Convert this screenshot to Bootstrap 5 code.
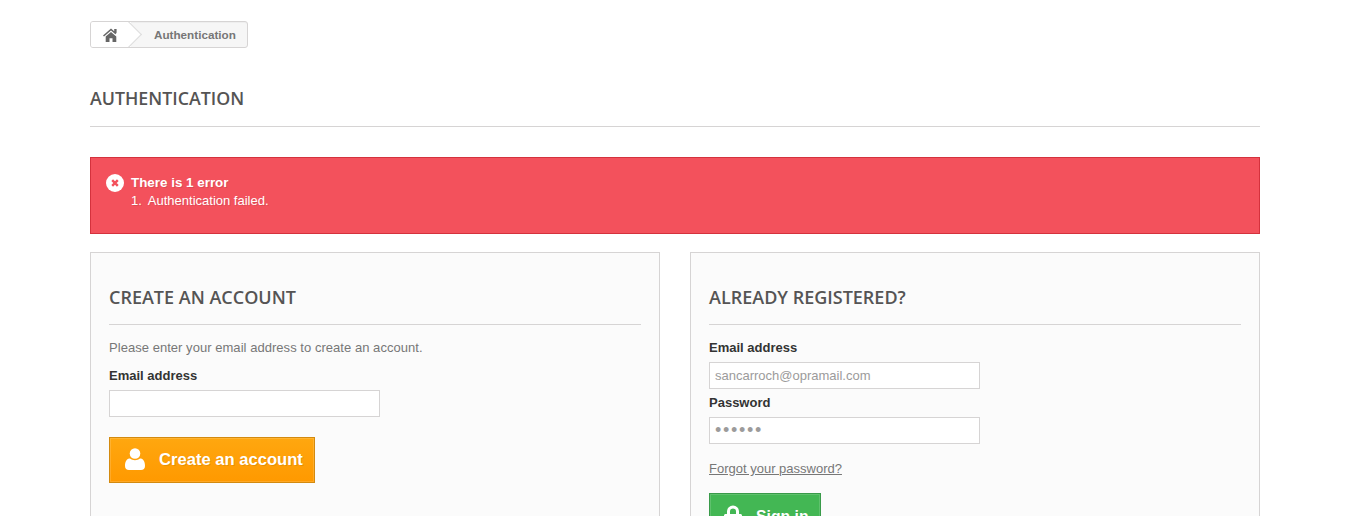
<!DOCTYPE html>
<html lang="en">
<head>
<meta charset="utf-8">
<title>Authentication</title>
<link href="https://cdn.jsdelivr.net/npm/bootstrap@5.3.0/dist/css/bootstrap.min.css" rel="stylesheet">
<style>
html,body{overflow:hidden;height:516px}
body{font-family:Arial,"Liberation Sans",sans-serif;font-size:13px;line-height:18px;color:#777;background:#fff}
.shell{width:1170px;margin:0 0 0 90px;padding-top:21px}
.crumbs{width:158px;height:27px;border:1px solid #d6d4d4;border-radius:3px;background:#f6f6f6;overflow:hidden;font-size:11.7px;font-weight:700;color:#777;box-shadow:0 1px 0 #eee inset}
.crumb-home{width:40px;height:100%;background:#fff;position:relative;padding-left:12px}
.crumb-tip{position:absolute;right:-7px;top:3px;width:19px;height:19px;background:#fff;border-top:1px solid #dcdcdc;border-right:1px solid #dcdcdc;transform:rotate(45deg)}
.crumb-text{padding-left:23px;position:relative}
.page-title{font-family:"Open Sans",sans-serif;font-weight:600;font-size:17.8px;line-height:22px;color:#555454;text-transform:uppercase;margin:39px 0 0;padding-bottom:17px;border-bottom:1px solid #d6d4d4}
.err{background:#f3515c;border:1px solid #d4323d;color:#fff;height:77px;margin-top:30px;padding:15px;text-shadow:1px 1px rgba(0,0,0,.1);font-size:13px}
.err-head{height:19px;margin-bottom:1px}
.err-icon{margin-right:7px}
.err-title{font-weight:700;font-size:13.4px}
.err-line{padding-left:25px;margin-top:-1px}
.err-gap{margin-left:6px}
.cols{--bs-gutter-x:30px;margin-top:18px}
.panel-box{background:#fbfbfb;border:1px solid #d6d4d4;padding:30px 18px 0;height:300px}
.panel-title{font-family:"Open Sans",sans-serif;font-weight:600;font-size:18px;line-height:29px;color:#555454;text-transform:uppercase;margin:0 0 14px;padding-bottom:12px;border-bottom:1px solid #d6d4d4}
.intro{margin:0 0 10px;height:18px;letter-spacing:.04px}
.lbl{display:block;font-weight:700;color:#333;margin:0 0 5px;line-height:18px}
.fld{display:block;width:271px;height:27px;border:1px solid #d6d4d4;background:#fff;padding:3px 5px;color:#9c9b9b;font-family:inherit;font-size:13px;line-height:19px;outline:0;border-radius:0}
.fld-stack{margin-bottom:5px}
.dots{font-size:18px;letter-spacing:1.700px;color:#9c9b9b}
.act{display:inline-flex;align-items:center;border:1px solid;color:#fff;font-weight:700;font-size:16.6px;line-height:21px;text-shadow:1px 1px rgba(0,0,0,.1);padding:0;border-radius:0}
.act-orange{width:206px;height:46px;margin-top:20px;background:linear-gradient(#ffa70f,#ff9900);border-color:#d38a0f;padding:0 0 2px 15px;box-shadow:inset 0 0 0 1px rgba(255,255,255,.15)}
.act-green{width:112px;height:46px;margin-top:15px;background:#43b754;border-color:#399a49;padding-left:14px;font-size:15.8px;box-shadow:inset 0 0 0 1px rgba(255,255,255,.15)}
.act svg{flex:none}
.act-orange svg{margin-right:14px}
.act-green svg{margin-right:14px}
.forgot{display:inline-block;color:#777;text-decoration:underline;margin-top:16px;font-size:13px}
</style>
</head>
<body>
<div class="shell">
  <nav class="crumbs d-flex align-items-center">
    <div class="crumb-home d-flex align-items-center">
      <span class="crumb-tip"></span>
      <svg width="16" height="14" viewBox="0 0 16 14" aria-label="Home"><path fill="#666" d="M8 .4 0 7.400l1 1.100L8 2.600l7 5.900 1-1.100-2.400-2.100V1h-2.400v2.300zM2.700 8.600V14h3.800v-3.800h3V14h3.800V8.600L8 4.100z"/></svg>
    </div>
    <span class="crumb-text">Authentication</span>
  </nav>
  <h1 class="page-title">Authentication</h1>
  <div class="err">
    <div class="d-flex align-items-center err-head">
      <svg class="err-icon" width="18" height="18" viewBox="0 0 18 18" aria-hidden="true"><circle cx="9" cy="9" r="9" fill="#fff"/><path d="M6.200 6.200l5.600 5.600M11.800 6.200l-5.600 5.600" stroke="#f3515c" stroke-width="2.400"/></svg>
      <span class="err-title">There is 1 error</span>
    </div>
    <div class="err-line">1.<span class="err-gap">Authentication failed.</span></div>
  </div>
  <div class="row cols">
    <div class="col-6">
      <form class="panel-box">
        <h3 class="panel-title">Create an account</h3>
        <p class="intro">Please enter your email address to create an account.</p>
        <label class="lbl" for="ca">Email address</label>
        <input class="fld" id="ca" type="text">
        <button class="act act-orange" type="button">
          <svg width="20" height="22" viewBox="0 0 20 22" aria-hidden="true"><circle cx="10" cy="5.500" r="5.300" fill="#fff"/><path fill="#fff" d="M0 18c0-5 2-7.500 5-7.500 1.500 1.200 3 1.700 5 1.700s3.500-.5 5-1.700c3 0 5 2.500 5 7.500 0 2.500-1.500 4-4 4H4c-2.500 0-4-1.500-4-4z"/></svg>
          Create an account
        </button>
      </form>
    </div>
    <div class="col-6">
      <form class="panel-box">
        <h3 class="panel-title">Already registered?</h3>
        <label class="lbl" for="em">Email address</label>
        <input class="fld fld-stack" id="em" type="text" value="sancarroch@opramail.com">
        <label class="lbl" for="pw">Password</label>
        <input class="fld dots" id="pw" type="password" value="secret">
        <a class="forgot" href="#">Forgot your password?</a>
        <div>
          <button class="act act-green" type="button">
            <svg width="18" height="22" viewBox="0 0 18 22" aria-hidden="true"><path fill="#fff" fill-rule="evenodd" d="M3 9V6.500a6 6 0 0 1 12 0V9h1.500c.8 0 1.500.7 1.500 1.500v9c0 .8-.7 1.500-1.500 1.500h-15C.7 21 0 20.300 0 19.500v-9C0 9.700.7 9 1.500 9zM6 9h6V6.500a3 3 0 0 0-6 0z"/></svg>
            Sign in
          </button>
        </div>
      </form>
    </div>
  </div>
</div>
<script src="https://cdn.jsdelivr.net/npm/bootstrap@5.3.0/dist/js/bootstrap.bundle.min.js"></script>
</body>
</html>
